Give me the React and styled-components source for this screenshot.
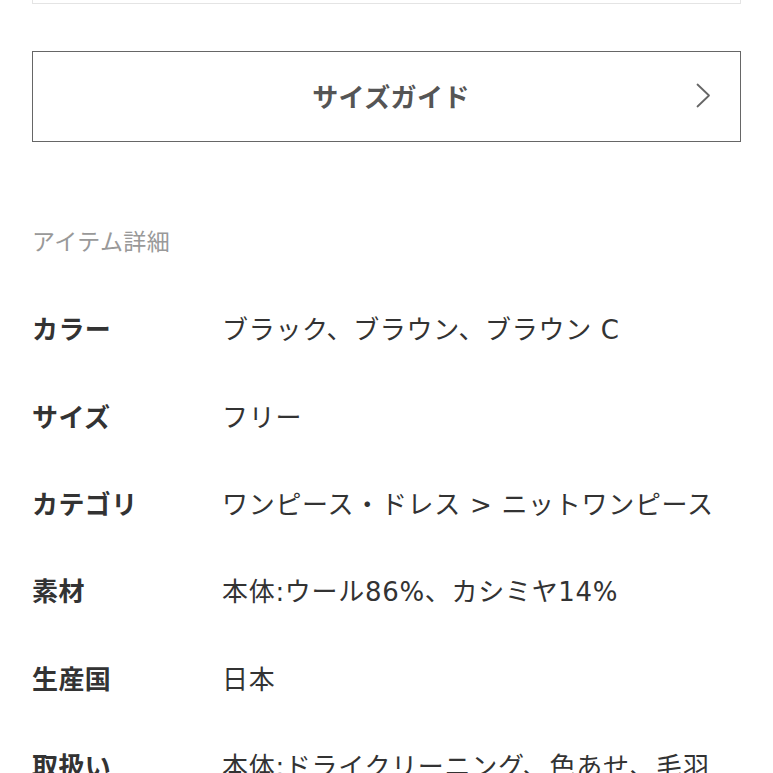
import React from "react";
import styled, { createGlobalStyle } from "styled-components";

const GlobalStyle = createGlobalStyle`
  html, body {
    margin: 0;
    padding: 0;
    background: #ffffff;
  }
  body {
    font-family: "Noto Sans CJK JP", "Noto Sans", sans-serif;
    color: #333333;
  }
`;

const Page = styled.div`
  padding: 0 32px;
  display: flex;
  flex-direction: column;
`;

const PrevBox = styled.div`
  height: 4px;
  box-sizing: border-box;
  border: 1px solid #e4e4e4;
  border-top: none;
`;

const GuideButton = styled.button`
  margin-top: 47px;
  height: 91px;
  box-sizing: border-box;
  border: 1.5px solid #666666;
  background: #ffffff;
  display: grid;
  grid-template-columns: 1fr auto 1fr;
  align-items: center;
  padding: 0 29px 3px 38px;
  cursor: pointer;
  font-family: inherit;
`;

const GuideLabel = styled.span`
  grid-column: 2;
  font-size: 26px;
  font-weight: 700;
  color: #555555;
  letter-spacing: 0.4px;
`;

const Chevron = styled.svg`
  grid-column: 3;
  justify-self: end;
  width: 15px;
  height: 25px;
`;

const SectionTitle = styled.h2`
  margin: 82px 0 0;
  font-size: 23px;
  line-height: 32px;
  font-weight: 400;
  color: #999999;
  letter-spacing: 0.4px;
`;

const DetailList = styled.dl`
  margin: 28px 0 0;
  display: flex;
  flex-direction: column;
`;

const Row = styled.div`
  display: grid;
  grid-template-columns: 190px 1fr;
  align-items: center;
  height: 87.4px;
`;

const Term = styled.dt`
  font-size: 26px;
  font-weight: 700;
  color: #333333;
  letter-spacing: 0.4px;
  white-space: nowrap;
`;

const Desc = styled.dd`
  margin: 0;
  font-family: "DejaVu Sans", "Noto Sans CJK JP", sans-serif;
  font-size: 26px;
  font-weight: 400;
  color: #333333;
  letter-spacing: 0.7px;
  white-space: nowrap;
`;

const details = [
  ["カラー", "ブラック、ブラウン、ブラウン C"],
  ["サイズ", "フリー"],
  ["カテゴリ", "ワンピース・ドレス > ニットワンピース"],
  ["素材", "本体:ウール86%、カシミヤ14%"],
  ["生産国", "日本"],
  ["取扱い", "本体:ドライクリーニング、色あせ、毛羽"],
];

export default function App() {
  return (
    <>
      <GlobalStyle />
      <Page>
        <PrevBox />
        <GuideButton type="button">
          <GuideLabel>サイズガイド</GuideLabel>
          <Chevron viewBox="0 0 15 25" fill="none">
            <path
              d="M1.5 1.5 L13 12.5 L1.5 23.5"
              stroke="#666666"
              strokeWidth="1.8"
              strokeLinecap="round"
              strokeLinejoin="round"
            />
          </Chevron>
        </GuideButton>
        <SectionTitle>アイテム詳細</SectionTitle>
        <DetailList>
          {details.map(([term, desc]) => (
            <Row key={term}>
              <Term>{term}</Term>
              <Desc>{desc}</Desc>
            </Row>
          ))}
        </DetailList>
      </Page>
    </>
  );
}
